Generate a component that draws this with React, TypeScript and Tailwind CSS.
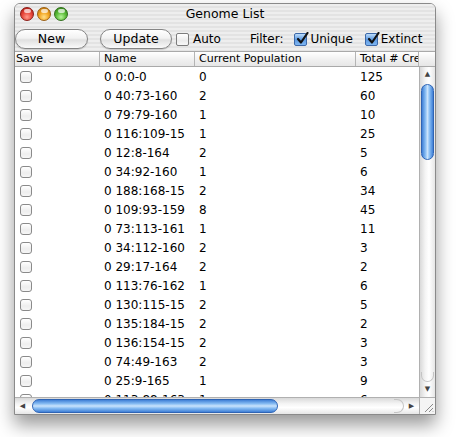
import React from "react";

const rows: [string, string, string][] = [
  ["0 0:0-0", "0", "125"],
  ["0 40:73-160", "2", "60"],
  ["0 79:79-160", "1", "10"],
  ["0 116:109-15", "1", "25"],
  ["0 12:8-164", "2", "5"],
  ["0 34:92-160", "1", "6"],
  ["0 188:168-15", "2", "34"],
  ["0 109:93-159", "8", "45"],
  ["0 73:113-161", "1", "11"],
  ["0 34:112-160", "2", "3"],
  ["0 29:17-164", "2", "2"],
  ["0 113:76-162", "1", "6"],
  ["0 130:115-15", "2", "5"],
  ["0 135:184-15", "2", "2"],
  ["0 136:154-15", "2", "3"],
  ["0 74:49-163", "2", "3"],
  ["0 25:9-165", "1", "9"],
  ["0 113:88-163", "1", "6"],
];

function Light({ color }: { color: "red" | "orange" | "green" }) {
  const bg =
    color === "red"
      ? "bg-[radial-gradient(circle_at_50%_75%,#ff9a8a_0%,#e8483c_45%,#a9150f_100%)] border-[#8a1a14]"
      : color === "orange"
      ? "bg-[radial-gradient(circle_at_50%_75%,#ffe08a_0%,#f3a521_45%,#b16a06_100%)] border-[#9a5e10]"
      : "bg-[radial-gradient(circle_at_50%_75%,#b8f59a_0%,#5cbc3a_45%,#2a7a12_100%)] border-[#2f6e1a]";
  return (
    <div className={`relative w-[14px] h-[14px] rounded-full border ${bg}`}>
      <div className="absolute left-[3px] top-[1px] w-[7px] h-[4px] rounded-full bg-white/70" />
    </div>
  );
}

function AquaButton({ label, width }: { label: string; width: string }) {
  return (
    <div
      className={`${width} h-[20px] rounded-full border border-[#858585] bg-[linear-gradient(#ffffff,#f2f2f2_45%,#e0e0e0_55%,#fafafa)] flex items-center justify-center text-[12.5px] shadow-[0_1px_1px_rgba(0,0,0,0.15)]`}
    >
      {label}
    </div>
  );
}

function Check({ checked }: { checked?: boolean }) {
  if (!checked)
    return (
      <div className="w-[13px] h-[13px] rounded-[2px] border border-[#7c7c7c] bg-[linear-gradient(#ffffff,#ececec_60%,#f8f8f8)]" />
    );
  return (
    <div className="relative w-[13px] h-[13px] rounded-[2px] border border-[#3c68a8] bg-[linear-gradient(#bcdcfb,#5d9ae2_50%,#7fb6f1)]">
      <svg className="absolute -top-[2px] left-[1px]" width="13" height="13" viewBox="0 0 13 13">
        <path d="M2 7 L5 10.5 L11.5 1" fill="none" stroke="#111" strokeWidth="2.2" strokeLinecap="round" strokeLinejoin="round" />
      </svg>
    </div>
  );
}

function RowCheck() {
  return (
    <div className="w-[12px] h-[12px] rounded-[3px] border border-[#8a8a8a] bg-[linear-gradient(#ffffff,#eeeeee_60%,#f6f6f6)]" />
  );
}

export default function App() {
  return (
    <div className="w-[456px] h-[437px] bg-white pl-[14px] pt-[3px] font-['DejaVu_Sans',sans-serif] text-black overflow-hidden">
      <div className="w-[422px] h-[412px] flex flex-col rounded-t-[6px] border border-[#8a8a8a] overflow-hidden bg-white shadow-[0_10px_18px_rgba(0,0,0,0.4)]">
        {/* title + toolbar, unified pinstripe */}
        <div className="bg-[repeating-linear-gradient(#eeeeee_0px,#eeeeee_2px,#e3e3e3_2px,#e3e3e3_4px)]">
          <div className="h-[19px] relative flex items-center pl-[5px] gap-[3px]">
            <Light color="red" />
            <Light color="orange" />
            <Light color="green" />
            <div className="absolute inset-0 flex items-center justify-center text-[12.5px] pt-[1px]">
              Genome List
            </div>
          </div>
          <div className="h-[28px] flex items-center pt-[4px] text-[12px]">
            <div className="ml-[0px]">
              <AquaButton label="New" width="w-[73px]" />
            </div>
            <div className="ml-[12px]">
              <AquaButton label="Update" width="w-[72px]" />
            </div>
            <div className="ml-[4px]">
              <Check />
            </div>
            <span className="ml-[4px]">Auto</span>
            <span className="ml-[29px]">Filter:</span>
            <div className="ml-[11px]">
              <Check checked />
            </div>
            <span className="ml-[3px]">Unique</span>
            <div className="ml-[12px]">
              <Check checked />
            </div>
            <span className="ml-[3px]">Extinct</span>
          </div>
        </div>

        {/* header */}
        <div className="h-[16px] flex border-y border-[#a9a9a9] bg-[linear-gradient(#ffffff,#f1f1f1_50%,#e6e6e6)] text-[11px] leading-[14px]">
          <div className="w-[85px] pl-[1px] border-r border-[#b4b4b4]">Save</div>
          <div className="w-[95px] pl-[4px] border-r border-[#b4b4b4]">Name</div>
          <div className="w-[161px] pl-[4px] border-r border-[#b4b4b4]">Current Population</div>
          <div className="w-[63px] pl-[4px] whitespace-nowrap overflow-hidden border-r border-[#b4b4b4]">Total # Cre</div>
          <div className="flex-1" />
        </div>

        {/* body */}
        <div className="h-[330px] flex">
          <div className="w-[404px] overflow-hidden text-[12px]">
            {rows.map((r, i) => (
              <div key={i} className="h-[19px] flex items-center">
                <div className="w-[85px] pl-[5px]">
                  <RowCheck />
                </div>
                <div className="w-[95px] pl-[4px] whitespace-nowrap overflow-hidden">{r[0]}</div>
                <div className="w-[161px] pl-[4px]">{r[1]}</div>
                <div className="w-[63px] pl-[4px]">{r[2]}</div>
              </div>
            ))}
          </div>
          <div className="w-[16px] flex flex-col border-l border-[#b0b0b0] bg-[linear-gradient(to_right,#d9d9d9,#f4f4f4_35%,#ffffff_60%,#e6e6e6)]">
            <div className="h-[15px] flex items-center justify-center text-[7px] text-[#444]">▲</div>
            <div className="mx-[1px] mt-[2px] h-[76px] rounded-full border border-[#2f64b4] bg-[linear-gradient(to_right,#3f7fd6,#84baf2_30%,#c9e3fc_50%,#84baf2_70%,#3f7fd6)]" />
            <div className="flex-1" />
            <div className="h-[10px] mx-[1px] rounded-b-full border-b border-x border-[#c4c4c4]" />
            <div className="h-[15px] flex items-center justify-center text-[7px] text-[#444]">▼</div>
          </div>
        </div>

        {/* horizontal scrollbar */}
        <div className="h-[17px] flex border-t border-[#b0b0b0]">
          <div className="flex-1 flex items-center bg-[linear-gradient(#d9d9d9,#f4f4f4_35%,#ffffff_60%,#e6e6e6)]">
            <div className="w-[15px] flex items-center justify-center text-[7px] text-[#444]">◀</div>
            <div className="ml-[2px] w-[246px] h-[14px] rounded-full border border-[#2f64b4] bg-[linear-gradient(#3f7fd6,#84baf2_30%,#c9e3fc_50%,#84baf2_70%,#3f7fd6)]" />
            <div className="flex-1" />
            <div className="w-[10px] h-[14px] rounded-r-full border-r border-y border-[#c4c4c4]" />
            <div className="w-[15px] flex items-center justify-center text-[7px] text-[#444]">▶</div>
          </div>
          <div className="w-[16px] border-l border-[#b0b0b0] bg-[#f4f4f4] relative">
            <svg className="absolute right-[1px] bottom-[1px]" width="12" height="12" viewBox="0 0 12 12">
              <path d="M11 3 L3 11 M11 7 L7 11 M11 10.5 L10.5 11" stroke="#8a8a8a" strokeWidth="1" />
            </svg>
          </div>
        </div>
      </div>
    </div>
  );
}
